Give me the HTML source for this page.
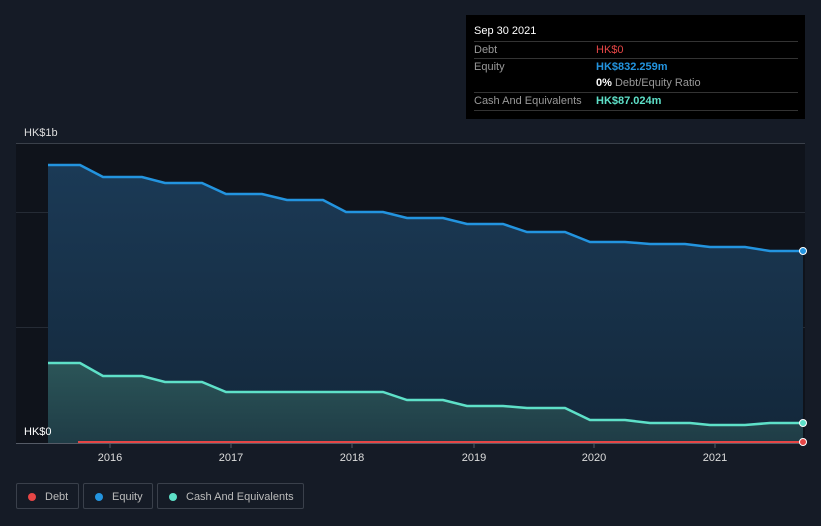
<!DOCTYPE html>
<html><head><meta charset="utf-8"><style>
body{margin:0;width:821px;height:526px;background:#151b26;font-family:"Liberation Sans",sans-serif;overflow:hidden;position:relative}
.tip{position:absolute;left:466px;top:15px;width:339px;height:104px;background:#000;color:#fff;font-size:11px}
.row{position:absolute;left:8px;width:324px;height:17px;border-top:1px solid #333;}
.row span{position:absolute;top:2px}
.lg{position:absolute;top:483px;height:26px;border:1px solid #3a404b;border-radius:2px;color:#bbb;font-size:11px;line-height:26px;box-sizing:border-box}
.lg i{position:absolute;left:11px;top:9px;width:8px;height:8px;border-radius:50%}
.lg b{font-weight:normal;position:absolute;left:28px}
</style></head><body>
<svg width="821" height="526" style="position:absolute;left:0;top:0">
<defs>
<linearGradient id="ge" x1="0" y1="0" x2="0" y2="1"><stop offset="0" stop-color="#1b3a56"/><stop offset="1" stop-color="#13273a"/></linearGradient>
<linearGradient id="gc" x1="0" y1="0" x2="0" y2="1"><stop offset="0" stop-color="#2b5558"/><stop offset="1" stop-color="#1f3c46"/></linearGradient>
</defs>
<rect x="16" y="143" width="789" height="300" fill="#0f131b"/>
<line x1="16" y1="143.5" x2="805" y2="143.5" stroke="#3a404a"/>
<line x1="16" y1="212.5" x2="805" y2="212.5" stroke="#252b35"/>
<line x1="16" y1="327.5" x2="805" y2="327.5" stroke="#252b35"/>
<path d="M48,165 L80,165 103,177 142,177 165,183 202,183 226,194 262,194 287,200 323,200 346,212 383,212 407,218 443,218 467,224 503,224 527,232 565,232 590,242 625,242 650,244 685,244 710,247 745,247 770,251 803,251 L803,443 L48,443Z" fill="url(#ge)"/>
<path d="M48,363 L80,363 103,376 142,376 165,382 202,382 226,392 383,392 407,400 443,400 467,406 503,406 527,408 565,408 590,420 625,420 650,423 690,423 710,425 745,425 770,423 803,423 L803,443 L48,443Z" fill="url(#gc)"/>
<path d="M48,165 L80,165 103,177 142,177 165,183 202,183 226,194 262,194 287,200 323,200 346,212 383,212 407,218 443,218 467,224 503,224 527,232 565,232 590,242 625,242 650,244 685,244 710,247 745,247 770,251 803,251" fill="none" stroke="#2394df" stroke-width="2.5"/>
<path d="M48,363 L80,363 103,376 142,376 165,382 202,382 226,392 383,392 407,400 443,400 467,406 503,406 527,408 565,408 590,420 625,420 650,423 690,423 710,425 745,425 770,423 803,423" fill="none" stroke="#5ee0c8" stroke-width="2.5"/>
<line x1="16" y1="443.5" x2="805" y2="443.5" stroke="#555b66"/>
<line x1="78" y1="442" x2="803" y2="442" stroke="#e64646" stroke-width="2"/>
<circle cx="803" cy="251" r="3.5" fill="#2394df" stroke="#fff" stroke-width="1"/>
<circle cx="803" cy="423" r="3.5" fill="#5ee0c8" stroke="#fff" stroke-width="1"/>
<circle cx="803" cy="442" r="3.5" fill="#e64646" stroke="#fff" stroke-width="1"/>
<g stroke="#555b66"><line x1="110" y1="444" x2="110" y2="448"/><line x1="231" y1="444" x2="231" y2="448"/><line x1="352" y1="444" x2="352" y2="448"/><line x1="474" y1="444" x2="474" y2="448"/><line x1="594" y1="444" x2="594" y2="448"/><line x1="715" y1="444" x2="715" y2="448"/></g>
<g fill="#ddd" font-size="11" text-anchor="middle" font-family="Liberation Sans"><text x="110" y="461">2016</text><text x="231" y="461">2017</text><text x="352" y="461">2018</text><text x="474" y="461">2019</text><text x="594" y="461">2020</text><text x="715" y="461">2021</text></g>
<text x="24" y="136" fill="#ddd" font-size="11" font-family="Liberation Sans">HK$1b</text>
<text x="24" y="435" fill="#fff" font-size="11" font-family="Liberation Sans">HK$0</text>
</svg>
<div class="tip">
<div style="position:absolute;left:8px;top:10px;font-size:11px">Sep 30 2021</div>
<div class="row" style="top:26px"><span style="color:#999">Debt</span><span style="left:122px;color:#e64646">HK$0</span></div>
<div class="row" style="top:43px"><span style="color:#999">Equity</span><span style="left:122px;color:#2394df;font-weight:bold">HK$832.259m</span></div>
<div class="row" style="top:60px;border-top:none"><span style="left:122px;color:#999"><b style="color:#fff">0%</b> Debt/Equity Ratio</span></div>
<div class="row" style="top:77px;border-bottom:1px solid #333"><span style="color:#999">Cash And Equivalents</span><span style="left:122px;color:#5ee0c8;font-weight:bold">HK$87.024m</span></div>
</div>
<div class="lg" style="left:16px;width:63px"><i style="background:#e64646"></i><b>Debt</b></div>
<div class="lg" style="left:83px;width:70px"><i style="background:#2394df"></i><b>Equity</b></div>
<div class="lg" style="left:157px;width:147px"><i style="background:#5ee0c8"></i><b>Cash And Equivalents</b></div>
</body></html>
